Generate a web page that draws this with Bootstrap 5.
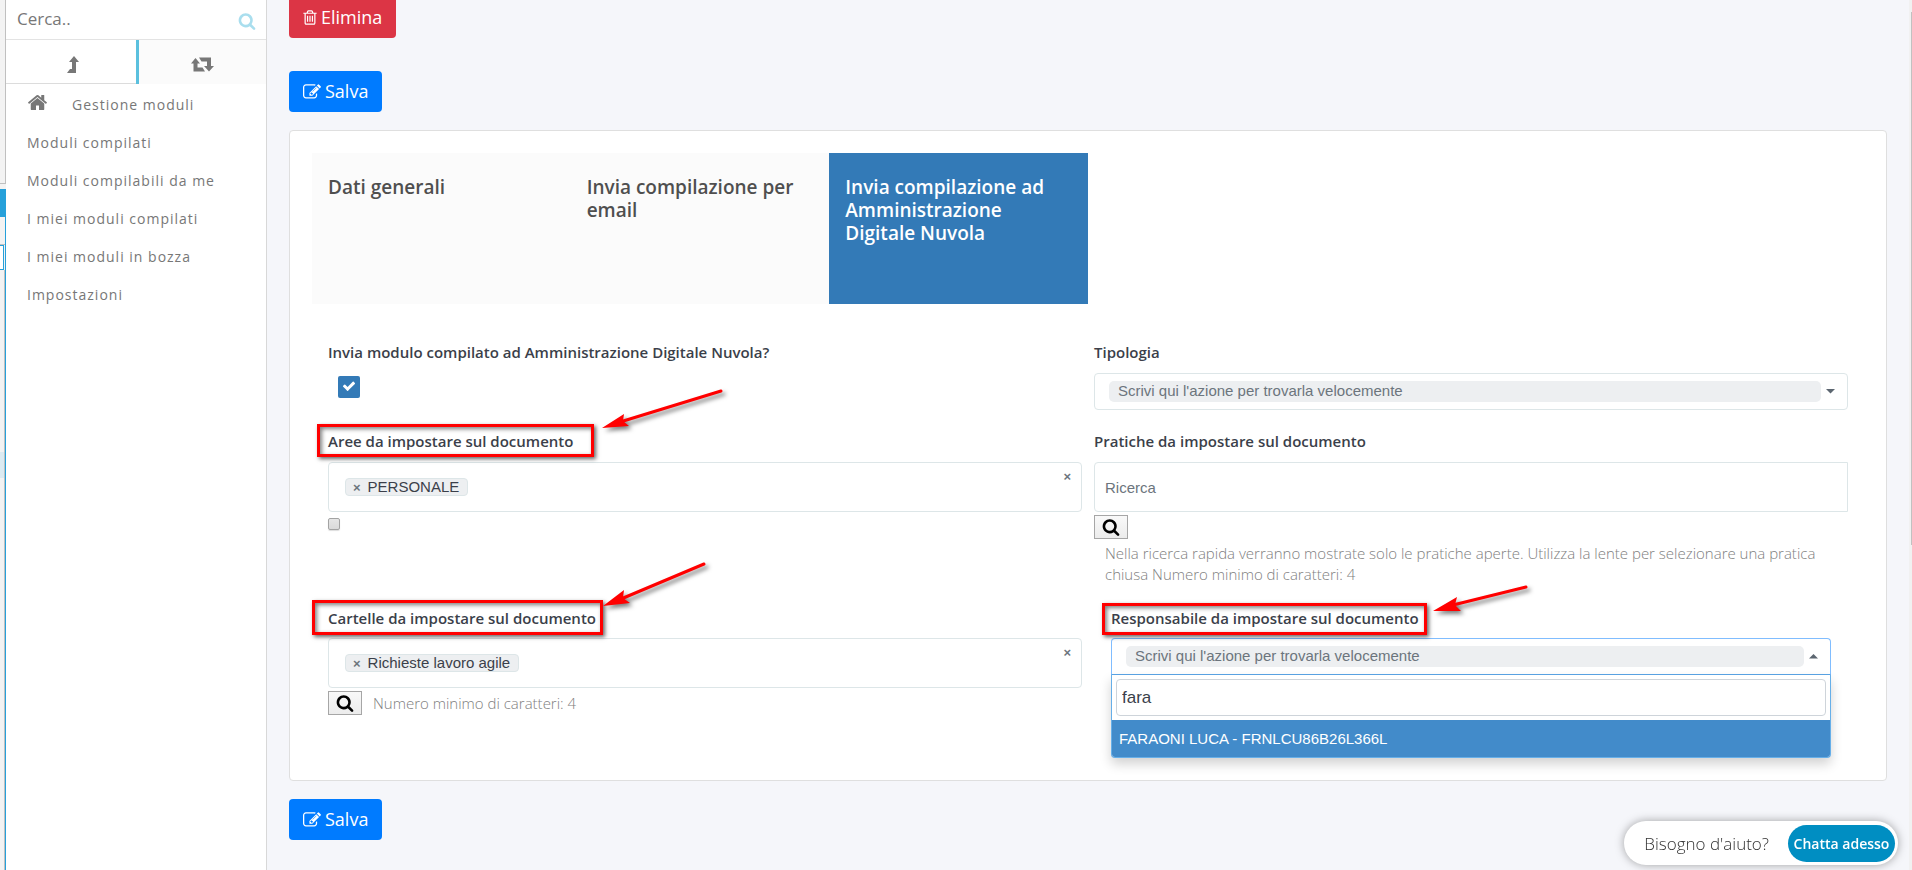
<!DOCTYPE html>
<html lang="it">
<head>
<meta charset="utf-8">
<meta name="viewport" content="width=device-width, initial-scale=1">
<title>Gestione moduli</title>
<link href="https://cdn.jsdelivr.net/npm/bootstrap@5.3.0/dist/css/bootstrap.min.css" rel="stylesheet">
<style>
  body { font-family: "Open Sans", sans-serif; font-size: 15px; line-height: 21px; color: #3b3f4a; background: #f5f6fa; }
  .page { min-height: 100vh; overflow: hidden; }
  .fa { fill: currentColor; flex: none; }
  .arial { font-family: "Liberation Sans", Arial, sans-serif; }

  /* edge of the window behind */
  .edge { width: 6px; background: #f3f3f3; }
  .edge-top { height: 184px; border-right: 1px solid #c0c0c0; border-bottom: 1px solid #c0c0c0; }
  .edge-sel { height: 28px; margin-top: 5px; background: #26a0da; }
  .edge-rest { border-right: 1px solid #26a0da; }
  .edge-gap { height: 28px; border-bottom: 1px solid #c0c0c0; }
  .edge-field { width: 4px; height: 25px; background: #fff; border: 1px solid #26a0da; border-left: 0; }
  .edge-list { border-right: 1px solid #c0c0c0; padding-top: 182px; }
  .edge-item { height: 26px; background: #dcebf2; }

  /* sidebar */
  .side { width: 261px; background: #fff; border-right: 1px solid #d8d8d8; }
  .side-search { height: 40px; padding: 0 10px 2px 11px; border-bottom: 1px solid #e3e3e3; }
  .side-search input { border: 0; outline: 0; min-width: 0; background: none; font-size: 17px; color: #777; padding: 0; }
  .side-search input::placeholder { color: #777; opacity: 1; }
  .side-search button { border: 0; background: none; padding: 4px 0 0; color: #a9deee; line-height: 1; }
  .side-tabs { height: 44px; color: #777; }
  .side-tabs a { color: inherit; }
  .side-tabs .on { flex: 0 0 51%; border-right: 3px solid #5bc0de; position: relative; }
  .side-tabs .on::after { content: ""; position: absolute; left: 0; right: 0; bottom: 0; height: 1px; background: #dcdcdc; }
  .side-tabs .off { background: #fbfbfb; }
  .side-menu a { display: flex; align-items: center; height: 38px; padding: 2px 0 0 21px; color: #777; text-decoration: none; letter-spacing: 1px; font-size: 14px; }

  /* main column */
  .main { min-width: 0; padding: 0 22px; margin-top: -3px; }
  .scroll { width: 3px; background: #f1f1f1; padding: 12px 0 0 2px; }
  .scroll div { height: 533px; background: #c1c1c1; }
  .btn-act { font-size: 18px; line-height: 27px; padding: 6px 13px; border-radius: 4px; display: inline-flex; align-items: center; gap: 4px; border: 1px solid transparent; color: #fff; height: 41px; }
  .btn-del { background: #dc3545; }
  .btn-save { background: #007bff; }
  .act-row { margin-top: 33px; }
  .panel { background: #fff; border: 1px solid #dfdfdf; border-radius: 4px; margin: 18px 0; padding: 22px 22px 65px; }
  .step { min-height: 151px; padding: 23px 16px; background: #fbfbfb; color: #4f4f4f; font-size: 19px; line-height: 23px; font-weight: 600; text-decoration: none; }
  .step.active { background: #337ab7; color: #fff; }
  .fields { padding: 38px 16px 0; }
  .fields .row { --bs-gutter-x: 12px; }
  .fields .row + .row { margin-top: 21px; }
  .fields .row.last { margin-top: 23px; }
  .cap { display: block; width: max-content; margin-bottom: 10px; font-weight: 600; font-size: 15px; line-height: 21px; position: relative; }
  .last .cap { margin-bottom: 9px; }
  .inset { padding: 0 17px; }

  .pick { height: 37px; border: 1px solid #dde6e8; border-radius: 4px; background: #fff; padding: 0 8px 1px 14px; }
  .pick select { appearance: none; flex: 1; min-width: 0; height: 21px; border: 0; outline: 0; border-radius: 5px; background: #edeff1; color: #6c757d; font-size: 15px; line-height: 20px; padding: 0 9px 1px; }
  .pick.open { border-color: #80bdff; border-bottom-color: #5aa5e6; border-radius: 4px 4px 0 0; }
  .tags { height: 50px; border: 1px solid #dde6e8; border-radius: 4px; padding: 0 10px 0 16px; }
  .tag { border: 1px solid #dde6e8; border-radius: 4px; background: #edeff1; height: 18px; line-height: 16px; padding: 0 8px 0 7px; color: #3b3f4a; }
  .tag button, .clear { border: 0; background: none; padding: 0; color: #6c757d; font-weight: 700; font-size: 13px; line-height: 16px; }
  .tag button { margin-right: 7px; }
  .clear { margin-top: 6px; }
  .find { height: 50px; border: 1px solid #dde6e8; border-radius: 4px 0 0 4px; padding: 0 10px; font-size: 15px; }
  .find::placeholder { color: #6c757d; opacity: 1; }
  .lens { width: 34px; height: 24px; border: 1px solid #a6a6a6; background: linear-gradient(#f9f9f9, #ececec); color: #000; padding: 0; line-height: 1; }
  .lens-row { margin-top: 3px; gap: 11px; }
  .hint { color: #808080; font-size: 15px; font-weight: 300; line-height: 21px; }
  .hint-block { margin: 4px 11px 0; }
  .big-check { width: 22px; height: 22px; margin: 14px 0 0 10px; border: 0; border-radius: 2px; appearance: none; background: #337ab7; display: block; }
  .cap + .big-check { margin-top: 13px; }
  .big-check:checked { background: #337ab7 url("data:image/svg+xml,%3Csvg xmlns='http://www.w3.org/2000/svg' viewBox='0 0 1792 1792'%3E%3Cpath fill='%23fff' d='M1671 566q0 40-28 68l-724 724-136 136q-28 28-68 28t-68-28l-136-136-362-362q-28-28-28-68t28-68l136-136q28-28 68-28t68 28l294 295 656-657q28-28 68-28t68 28l136 136q28 28 28 68z'/%3E%3C/svg%3E") center 3px / 14px no-repeat; }
  .tiny-check { appearance: none; width: 12px; height: 12px; border: 1px solid #a3a3a3; border-radius: 2px; background: linear-gradient(#e6e6e6, #dadada); margin: 6px 0 0; display: block; box-shadow: 0 1px 1px #ddd; }

  .drop { border: 1px solid #66afe9; border-top: 0; border-radius: 0 0 4px 4px; background: #fff; box-shadow: 0 6px 12px rgba(0,0,0,.18); left: 0; right: 0; top: 100%; overflow: hidden; padding-top: 4px; z-index: 3; }
  .drop input { display: block; width: calc(100% - 8px); margin: 0 4px 4px; height: 37px; border: 1px solid #ced4da; border-radius: 4px; padding: 0 5px; font-size: 17px; color: #3b3f4a; outline: 0; }
  .drop button { display: block; width: 100%; height: 37px; border: 0; background: #428bca; color: #fff; text-align: left; padding: 0 7px; font-size: 15px; }

  /* red annotations laid over the form */
  .ring { position: absolute; border: 3px solid #f00; box-shadow: 2px 2px 4px rgba(0,0,0,.6), inset 2px 2px 4px rgba(0,0,0,.5); pointer-events: none; z-index: 2; }
  .ring svg { position: absolute; overflow: visible; filter: drop-shadow(3px 3px 2px rgba(0,0,0,.5)); }
  .ring-a { inset: -7px -21px -5px -11px; }
  .ring-b { inset: -8px -7px -6px -16px; }
  .ring-c { inset: -5px -8px -6px -9px; }

  .chat { position: fixed; right: 14px; bottom: 5px; height: 44px; background: #fff; border-radius: 22px; padding: 0 3px 0 20px; gap: 19px; box-shadow: 0 0 10px rgba(0,0,0,.35); color: #333; font-size: 17px; font-weight: 300; z-index: 5; }
  .chat button { height: 37px; width: 107px; border: 0; border-radius: 19px; background: #008ec2; color: #fff; font-size: 14px; font-weight: 600; padding: 0; white-space: nowrap; }
</style>
</head>
<body>
<svg class="d-none" aria-hidden="true">
  <symbol id="i-search" viewBox="0 0 1792 1792"><path d="M1216 832q0-185-131.500-316.500T768 384 451.500 515.500 320 832t131.500 316.500T768 1280t316.500-131.500T1216 832zm512 832q0 52-38 90t-90 38q-54 0-90-38l-343-342q-179 124-399 124-143 0-273.500-55.500t-225-150-150-225T64 832t55.500-273.500 150-225 225-150T768 128t273.500 55.500 225 150 150 225T1472 832q0 220-124 399l343 343q37 37 37 90z"/></symbol>
  <symbol id="i-home" viewBox="0 0 1792 1792"><path d="M1472 992v480q0 26-19 45t-45 19h-384v-384h-256v384h-384q-26 0-45-19t-19-45v-480q0-1 .5-3t.5-3l575-474 575 474q1 2 1 6zm223-69l-62 74q-8 9-21 11h-3q-13 0-21-7l-692-577-692 577q-12 8-24 7-13-2-21-11l-62-74q-8-10-7-23.500t11-21.500l719-599q32-26 76-26t76 26l244 204v-195q0-14 9-23t23-9h192q14 0 23 9t9 23v408l219 182q10 8 11 21.500t-7 23.500z"/></symbol>
  <symbol id="i-edit" viewBox="0 0 1792 1792"><path d="M888 1184l116-116-152-152-116 116v56h96v96h56zm440-720q-16-16-33 1l-350 350q-17 17-1 33t33-1l350-350q17-17 1-33zm80 594v190q0 119-84.500 203.500t-203.500 84.500h-832q-119 0-203.500-84.500t-84.500-203.500v-832q0-119 84.500-203.500t203.500-84.500h832q63 0 117 25 15 7 18 23 3 17-9 29l-49 49q-14 14-32 8-23-6-45-6h-832q-66 0-113 47t-47 113v832q0 66 47 113t113 47h832q66 0 113-47t47-113v-126q0-13 9-22l64-64q15-15 35-7t20 29zm-96-738l288 288-672 672h-288v-288zm444 132l-92 92-288-288 92-92q28-28 68-28t68 28l152 152q28 28 28 68t-28 68z"/></symbol>
  <symbol id="i-trash" viewBox="192 0 1408 1792"><path d="M704 736v576q0 14-9 23t-23 9h-64q-14 0-23-9t-9-23v-576q0-14 9-23t23-9h64q14 0 23 9t9 23zm256 0v576q0 14-9 23t-23 9h-64q-14 0-23-9t-9-23v-576q0-14 9-23t23-9h64q14 0 23 9t9 23zm256 0v576q0 14-9 23t-23 9h-64q-14 0-23-9t-9-23v-576q0-14 9-23t23-9h64q14 0 23 9t9 23zm128 724v-948h-896v948q0 22 7 40.500t14.500 27 10.500 8.500h832q3 0 10.500-8.500t14.500-27 7-40.500zm-672-1076h448l-48-117q-7-9-17-11h-317q-10 2-17 11zm928 32v64q0 14-9 23t-23 9h-96v948q0 83-47 143.500t-113 60.500h-832q-66 0-113-58.500t-47-141.500v-952h-96q-14 0-23-9t-9-23v-64q0-14 9-23t23-9h309l70-167q15-37 54-63t79-26h320q40 0 79 26t54 63l70 167h309q14 0 23 9t9 23z"/></symbol>
</svg>

<div class="page d-flex">
  <div class="edge d-flex flex-column flex-shrink-0">
    <div class="edge-top"></div>
    <div class="edge-sel"></div>
    <div class="edge-rest flex-grow-1 d-flex flex-column">
      <div class="edge-gap"></div>
      <div class="edge-field"></div>
      <div class="edge-list flex-grow-1"><div class="edge-item"></div></div>
    </div>
  </div>

  <aside class="side flex-shrink-0">
    <form class="side-search d-flex align-items-center">
      <input class="flex-grow-1" type="text" placeholder="Cerca.." aria-label="Cerca">
      <button type="button" aria-label="Avvia ricerca"><svg class="fa" width="18" height="18"><use href="#i-search"/></svg></button>
    </form>
    <div class="side-tabs d-flex">
      <a href="#" class="on d-flex align-items-center justify-content-center" aria-label="Livello superiore">
        <svg class="fa ms-1 mt-1" width="12" height="17" viewBox="0 0 12 17"><path d="M7 0L12 6H9V17H0L3 13H5V6H2z"/></svg>
      </a>
      <a href="#" class="off flex-grow-1 d-flex align-items-center justify-content-center" aria-label="Cambia">
        <svg class="fa mt-1" width="23" height="15" viewBox="0 0 23 15"><path d="M4.500 1L9 6.500H6.500V10.500H11.500L14 14.500H2.500V6.500H0z"/><path d="M18 14.500L13 9H16V4.500H10.500L8 .5H20V9H23z"/></svg>
      </a>
    </div>
    <nav class="side-menu">
      <a href="#"><svg class="fa mb-1" width="21" height="21"><use href="#i-home"/></svg><span class="ps-4">Gestione moduli</span></a>
      <a href="#">Moduli compilati</a>
      <a href="#">Moduli compilabili da me</a>
      <a href="#">I miei moduli compilati</a>
      <a href="#">I miei moduli in bozza</a>
      <a href="#">Impostazioni</a>
    </nav>
  </aside>

  <main class="main flex-grow-1">
    <div><button type="button" class="btn btn-act btn-del"><svg class="fa" width="14" height="17"><use href="#i-trash"/></svg>Elimina</button></div>
    <div class="act-row"><button type="button" class="btn btn-act btn-save"><svg class="fa" width="18" height="18"><use href="#i-edit"/></svg>Salva</button></div>

    <section class="panel">
      <nav class="row g-0">
        <a href="#" class="col-2 step">Dati generali</a>
        <a href="#" class="col-2 step">Invia compilazione per email</a>
        <a href="#" class="col-2 step active">Invia compilazione ad Amministrazione Digitale Nuvola</a>
      </nav>

      <form class="fields">
        <div class="row">
          <div class="col-6">
            <label class="cap" for="invia">Invia modulo compilato ad Amministrazione Digitale Nuvola?</label>
            <input class="big-check" type="checkbox" id="invia" checked>
          </div>
          <div class="col-6">
            <label class="cap" for="tipologia">Tipologia</label>
            <div class="pick d-flex align-items-center">
              <select id="tipologia" class="arial"><option>Scrivi qui l'azione per trovarla velocemente</option></select>
              <svg width="18" height="5" viewBox="0 0 18 5"><path fill="#5c6670" d="M5 0h9L9.500 4.500z"/></svg>
            </div>
          </div>
        </div>

        <div class="row">
          <div class="col-6">
            <label class="cap" for="tutte">Aree da impostare sul documento
              <span class="ring ring-a"><svg width="120" height="40" style="left:282px;top:-38px"><path d="M119 2L18 33" stroke="#f00" stroke-width="3" stroke-linecap="round"/><path fill="#f00" d="M0 39L22 25L21 32L27 37z"/></svg></span>
            </label>
            <div class="tags arial d-flex align-items-center justify-content-between">
              <span class="tag"><button type="button" aria-label="Rimuovi PERSONALE">×</button>PERSONALE</span>
              <button type="button" class="clear align-self-start" aria-label="Svuota">×</button>
            </div>
            <input class="tiny-check" type="checkbox" id="tutte">
          </div>
          <div class="col-6">
            <label class="cap" for="pratiche">Pratiche da impostare sul documento</label>
            <input id="pratiche" class="find arial w-100 d-block" type="text" placeholder="Ricerca">
            <div class="lens-row d-flex"><button type="button" class="lens" aria-label="Cerca pratica"><svg class="fa" width="18" height="18"><use href="#i-search"/></svg></button></div>
            <div class="hint hint-block">Nella ricerca rapida verranno mostrate solo le pratiche aperte. Utilizza la lente per selezionare una pratica chiusa Numero minimo di caratteri: 4</div>
          </div>
        </div>

        <div class="row last">
          <div class="col-6">
            <div class="cap">Cartelle da impostare sul documento
              <span class="ring ring-b"><svg width="102" height="45" style="left:288px;top:-41px"><path d="M101 2L18 37" stroke="#f00" stroke-width="3" stroke-linecap="round"/><path fill="#f00" d="M0 44L21 28L20 36L27 41z"/></svg></span>
            </div>
            <div class="tags arial d-flex align-items-center justify-content-between">
              <span class="tag"><button type="button" aria-label="Rimuovi Richieste lavoro agile">×</button>Richieste lavoro agile</span>
              <button type="button" class="clear align-self-start" aria-label="Svuota">×</button>
            </div>
            <div class="lens-row d-flex align-items-center">
              <button type="button" class="lens" aria-label="Cerca cartella"><svg class="fa" width="18" height="18"><use href="#i-search"/></svg></button>
              <span class="hint">Numero minimo di caratteri: 4</span>
            </div>
          </div>
          <div class="col-6">
            <div class="inset">
              <label class="cap" for="responsabile">Responsabile da impostare sul documento
                <span class="ring ring-c"><svg width="94" height="26" style="left:328px;top:-21px"><path d="M93 2L20 20" stroke="#f00" stroke-width="3" stroke-linecap="round"/><path fill="#f00" d="M0 26L24 12L22 20L28 26z"/></svg></span>
              </label>
              <div class="position-relative">
                <div class="pick open d-flex align-items-center">
                  <select id="responsabile" class="arial"><option>Scrivi qui l'azione per trovarla velocemente</option></select>
                  <svg width="18" height="5" viewBox="0 0 18 5"><path fill="#5c6670" d="M5 4.500h9L9.500 0z"/></svg>
                </div>
                <div class="drop arial position-absolute">
                  <input type="text" value="fara" aria-label="Cerca responsabile">
                  <button type="button">FARAONI LUCA - FRNLCU86B26L366L</button>
                </div>
              </div>
            </div>
          </div>
        </div>
      </form>
    </section>

    <div><button type="button" class="btn btn-act btn-save"><svg class="fa" width="18" height="18"><use href="#i-edit"/></svg>Salva</button></div>
  </main>
  <div class="scroll flex-shrink-0"><div></div></div>
</div>

<div class="chat d-flex align-items-center"><span>Bisogno d'aiuto?</span><button type="button">Chatta adesso</button></div>
<script src="https://cdn.jsdelivr.net/npm/bootstrap@5.3.0/dist/js/bootstrap.bundle.min.js"></script>
</body>
</html>
